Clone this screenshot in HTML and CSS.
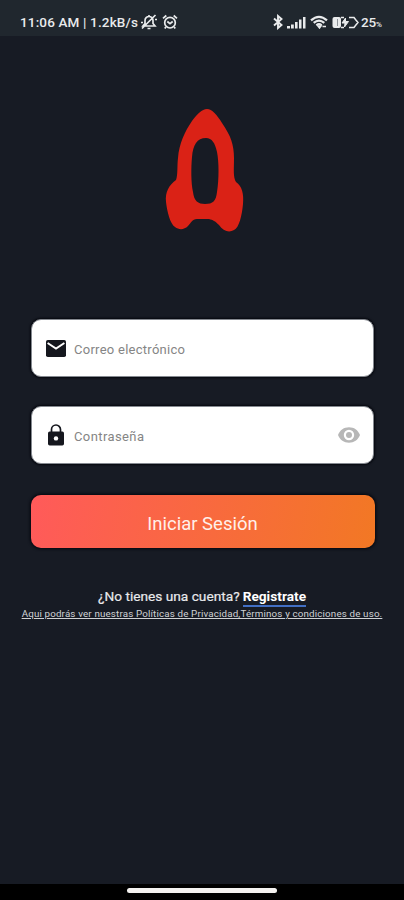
FILE: index.html
```html
<!DOCTYPE html>
<html lang="es">
<head>
<meta charset="utf-8">
<meta name="viewport" content="width=device-width, initial-scale=1">
<title>Iniciar Sesión</title>
<link rel="stylesheet" href="styles.css">
</head>
<body>
<div class="screen">
  <header class="status">
    <div class="status-left">
      <span class="clock">11:06 AM | 1.2kB/s</span>
      <svg class="bell" width="18" height="16" viewBox="0 0 18 16" fill="none" stroke="currentColor" stroke-width="1.700"><path d="M3 12h12l-2-2.500V6.500a4 4 0 0 0-8 0v3zM7.500 14.500h3M9 1v1.500M2 14.500L15.500 1M1 8.500h2M15 5.500h2"/></svg>
      <svg class="alarm" width="16" height="16" viewBox="0 0 16 16" fill="none" stroke="currentColor" stroke-width="1.700"><circle cx="8" cy="8.700" r="5.300"/><path d="M1 4.300L4.300 1.500M15 4.300L11.700 1.500M5.300 7.500L8 9.700l2.700-2.200M3.800 13l-1 1.500M12.200 13l1 1.500"/></svg>
    </div>
    <div class="status-right">
      <svg class="bluetooth" width="10" height="16" viewBox="0 0 10 16" fill="none" stroke="currentColor" stroke-width="1.900"><path d="M1 4.500l7.500 6.500L5 14V2l3.500 3L1 11.500"/></svg>
      <svg class="signal" width="19" height="13" viewBox="0 0 19 13" fill="currentColor"><path d="M0 10h3v2.500H0zM4 8.500h2.800v4H4zM8 6h2.600v6.500H8zM12 3.500h2.500v9H12zM16 1h2.500v11.500H16z"/></svg>
      <svg class="wifi" width="18" height="14" viewBox="0 0 18 14" fill="none" stroke="currentColor" stroke-width="2.200"><path d="M1 5.300Q9-1.700 17 5.300M3.700 7.900Q9 3.300 14.300 7.900M6.400 10.300Q9 8.100 11.600 10.300"/><path d="M8 11l1.500 2 1.500-2zM12.500 11.500h3.500" stroke-width="1.500"/></svg>
      <svg class="battery" width="27" height="13" viewBox="0 0 27 13"><path d="M9 1.500h3M17 1.500h5l1.500 2L26 6.500l-2.500 3-1.500 2h-5M9 11.500h3" fill="none" stroke="currentColor" stroke-width="1.500"/><rect x=".5" y="1" width="8.500" height="11" rx="2" fill="currentColor"/><path d="M13.500 2L10 7h3l-.5 4 4-5.500h-3z" fill="currentColor" stroke="currentColor"/><path d="M5.500 3v7" stroke="#8c9297"/></svg>
      <span class="percent">25<small>%</small></span>
    </div>
  </header>

  <main class="login">
    <svg class="logo" width="80" height="126" viewBox="0 0 80 126"><path fill="#da2216" fill-rule="evenodd" d="M42 1C47 1 52 7 57 15C66 28 69 37 69 50C69 62 68 69 71 74C77 78 79 86 78 96C77 107 74 120 69 122C64 125 58 123 54 117C50 113 48 112 44 111H32C27 111 26 115 23 118C19 122 14 122 10 119C5 116 2 103 1 94C0 84 4 77 11 72C13 67 12 58 13 50C14 36 20 23 27 13C32 6 37 1 42 1ZM41 30C32 30 28 37 27 49C26 60 26 75 28 84C29 93 33 96 40 96C48 96 51 93 52 84C54 71 54 54 52 44C50 35 47 30 41 30Z"/></svg>

    <form class="form">
      <label class="field">
        <svg class="mail" width="20" height="17" viewBox="0 0 20 17"><rect width="20" height="17" rx="1.800" fill="#15171e"/><path d="M1.600 3L10 8.500 18.400 3" fill="none" stroke="#fff" stroke-width="2"/></svg>
        <span class="hint">Correo electrónico</span>
      </label>
      <label class="field">
        <svg class="lock" width="16" height="22" viewBox="0 0 16 22"><path d="M3.500 9V5.500a4.500 4.500 0 0 1 9 0V9" fill="none" stroke="#15171e" stroke-width="1.700"/><rect y="7.500" width="16" height="14" rx="1.700" fill="#15171e"/><circle cx="8" cy="14.400" r="2.200" fill="#fff"/></svg>
        <span class="hint hint-password">Contraseña</span>
        <svg class="eye" width="22" height="16" viewBox="0 0 22 16"><path fill="#b7b7b7" fill-rule="evenodd" d="M0 8C2 3 6 .3 11 .3S20 3 22 8C20 13 16 15.700 11 15.700S2 13 0 8ZM11 2.800a5.200 5.200 0 1 0 0 10.400a5.200 5.200 0 0 0 0-10.400Z"/><circle cx="11" cy="8" r="3" fill="#b7b7b7"/></svg>
      </label>
      <button class="submit" type="button"><span>Iniciar Sesión</span></button>
    </form>

    <p class="signup"><span class="question">¿No tienes una cuenta?</span> <a class="register">Registrate</a></p>
    <p class="legal">Aqui podrás ver nuestras Políticas de Privacidad,Términos y condiciones de uso.</p>
  </main>

  <footer class="navbar"><div class="handle"></div></footer>
</div>
</body>
</html>
```
FILE: styles.css
```css
* { box-sizing: border-box; }
body { margin: 0; font-family: Roboto, sans-serif; background: #171b24; }
svg { display: block; flex: none; }
p { margin: 0; }
.screen { width: 404px; height: 900px; display: flex; flex-direction: column; overflow: hidden; }
.status {
  height: 36px; flex: none; background: #20272e; color: #e9ebec;
  display: flex; justify-content: space-between; padding: 8px 20px 0;
  font-size: 13.5px; font-weight: 500; line-height: 29px; white-space: nowrap;
}
.status-left, .status-right { display: flex; align-items: center; height: 28px; }
.clock { width: 120px; letter-spacing: .15px; }
.bell { margin-right: 4px; }
.bluetooth { margin-right: 4px; }
.signal { margin-right: 4px; }
.wifi { margin-right: 4px; }
.battery { margin-right: 2px; }
.percent { width: 23px; font-size: 13.5px; padding-top: 2px; letter-spacing: -.2px; }
.percent small { font-size: 8px; }
.login { flex: 1; display: flex; flex-direction: column; align-items: center; }
.logo { margin: 72px 0 0 6px; }
.form { width: 345px; margin: 85px 0 0 1px; display: flex; flex-direction: column; align-items: center; }
.field {
  width: 343px; height: 58px; margin-bottom: 29px; padding: 0 13px 0 14px;
  display: flex; align-items: center; background: #fff; border: 1px solid #858990; border-radius: 10px;
  box-shadow: 0 0 2px 1px #05070e;
}
.mail { margin-right: 8px; }
.lock { margin: 0 10px 0 2px; }
.hint { color: #858585; font-size: 13px; letter-spacing: .27px; padding-top: 3px; }
.hint-password { letter-spacing: .4px; }
.eye { margin-left: auto; }
.submit {
  width: 344px; height: 53px; margin-top: 2px; padding: 4px 0 0; border: 0; border-radius: 10px;
  background: linear-gradient(100deg, #ff5a5a, #f27824); color: #fff0ea;
  font: 400 18.5px Roboto, sans-serif; box-shadow: 0 0 3px 1px #05070e;
}
.signup { margin-top: 39px; height: 20px; display: flex; gap: 3px; color: #e9eaec; font-size: 13.7px; line-height: 19px; white-space: nowrap; }
.question { -webkit-text-stroke: .2px currentColor; }
.register { font-weight: 700; color: #fff; height: 20px; border-bottom: 2px solid #426fc4; }
.legal { color: #d0d2d5; font-size: 9.8px; letter-spacing: .15px; line-height: 14px; text-decoration: underline; white-space: nowrap; }
.navbar { height: 16px; flex: none; background: #000; display: flex; justify-content: center; padding-top: 4px; }
.handle { width: 150px; height: 5px; border-radius: 3px; background: #f4f2f0; }
```
